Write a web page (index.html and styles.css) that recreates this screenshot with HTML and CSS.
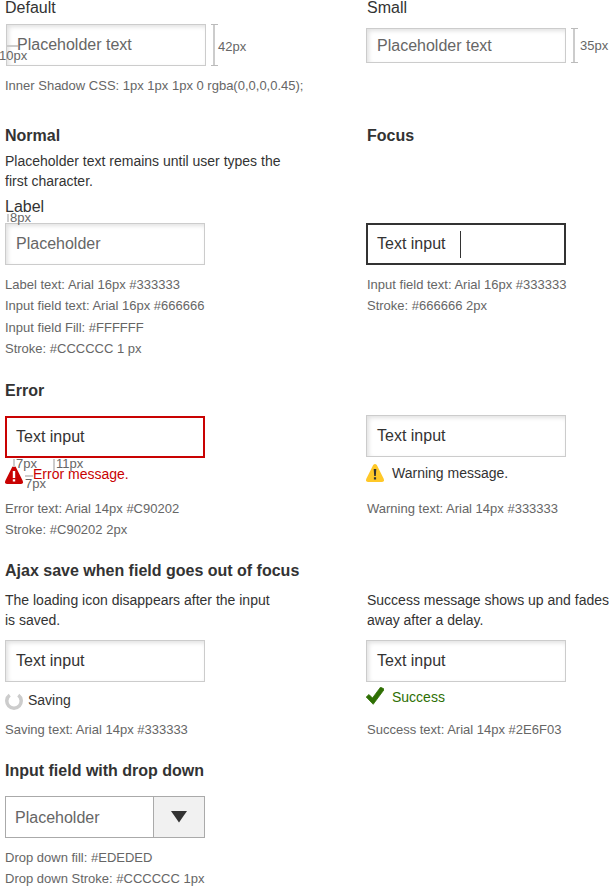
FILE: index.html
```
<!DOCTYPE html>
<html lang="en">
<head>
<meta charset="utf-8">
<title>Input fields</title>
<link rel="stylesheet" href="styles.css">
</head>
<body>
<main class="guide">
  <section class="row row-sizes">
    <div class="col">
      <div class="label">Default</div>
      <div class="field field-default">Placeholder text
        <span class="tick-h tick-pad"></span><span class="note note-pad">10px</span>
        <span class="bracket"></span><span class="note note-height">42px</span>
      </div>
      <div class="spec">Inner Shadow CSS: 1px 1px 1px 0 rgba(0,0,0,0.45);</div>
    </div>
    <div class="col">
      <div class="label">Small</div>
      <div class="field field-small">Placeholder text
        <span class="bracket"></span><span class="note note-height">35px</span>
      </div>
    </div>
  </section>

  <section class="row row-states">
    <div class="col">
      <h2>Normal</h2>
      <p>Placeholder text remains until user types the<br>first character.</p>
      <div class="label label-normal">Label</div>
      <div class="field">Placeholder
        <span class="tick-v tick-label"></span><span class="note note-label">8px</span>
      </div>
      <div class="spec">Label text: Arial 16px #333333<br>Input field text: Arial 16px #666666<br>Input field Fill: #FFFFFF<br>Stroke: #CCCCCC 1 px</div>
    </div>
    <div class="col">
      <h2>Focus</h2>
      <div class="field field-focus"><span>Text input</span><span class="caret"></span></div>
      <div class="spec">Input field text: Arial 16px #333333<br>Stroke: #666666 2px</div>
    </div>
  </section>

  <section class="row row-error">
    <div class="col">
      <h2>Error</h2>
      <div class="field field-error">Text input</div>
      <div class="message message-error">
        <svg class="icon" viewBox="0 0 18 18"><path fill="#c90202" d="M7.200 1Q9-1 10.800 1L17.700 14.800Q18.700 18 16 18H2Q-.7 18 .3 14.800Z"/><path fill="#fff" d="M7.800 5h2.400v7H7.800zM7.800 13.300h2.400v2.200H7.800z"/></svg>
        <span>Error message.</span>
        <span class="tick-v tick-icon"></span><span class="note note-icon">7px</span>
        <span class="tick-v tick-text"></span><span class="note note-text">11px</span>
        <span class="tick-h tick-gap"></span><span class="note note-gap">7px</span>
      </div>
      <div class="spec">Error text: Arial 14px #C90202<br>Stroke: #C90202 2px</div>
    </div>
    <div class="col">
      <div class="field field-warning">Text input</div>
      <div class="message message-warning">
        <svg class="icon" viewBox="0 0 18 18"><path fill="#ffc828" d="M7.200 1Q9-1 10.800 1L17.700 14.800Q18.700 18 16 18H2Q-.7 18 .3 14.800Z"/><path fill="#333" d="M7.700 5h2.600l-.5 7H8.200zM7.900 13.300h2.200v2.200H7.900z"/></svg>
        <span>Warning message.</span>
      </div>
      <div class="spec">Warning text: Arial 14px #333333</div>
    </div>
  </section>

  <section class="row row-ajax">
    <h2 class="wide">Ajax save when field goes out of focus</h2>
    <div class="col">
      <p>The loading icon disappears after the input<br>is saved.</p>
      <div class="field field-text">Text input</div>
      <div class="message message-saving">
        <svg class="icon" viewBox="0 0 18 18"><path d="M4.700 3.200A7.200 7.200 0 1 0 13.300 3.200" fill="none" stroke="#ccc" stroke-width="3.500"/></svg>
        <span>Saving</span>
      </div>
      <div class="spec">Saving text: Arial 14px #333333</div>
    </div>
    <div class="col">
      <p>Success message shows up and fades<br>away after a delay.</p>
      <div class="field field-text">Text input</div>
      <div class="message message-success">
        <svg class="icon" viewBox="0 0 18 18"><path d="M.2 10L3 7.500L6.500 11L14.500.2L17.800 1.800V3L7.200 17.300Z" fill="#2e6f03" stroke="#2e6f03" stroke-width=".8" stroke-linejoin="round"/></svg>
        <span>Success</span>
      </div>
      <div class="spec">Success text: Arial 14px #2E6F03</div>
    </div>
  </section>

  <section class="row row-select">
    <div class="col">
      <h2>Input field with drop down</h2>
      <div class="select">
        <span class="select-value">Placeholder</span>
        <span class="select-button"><svg width="16" height="12" viewBox="0 0 16 12"><path d="M0 0H16L8 11.500Z" fill="#333"/></svg></span>
      </div>
      <div class="spec">Drop down fill: #EDEDED<br>Drop down Stroke: #CCCCCC 1px</div>
    </div>
  </section>
</main>
</body>
</html>
```
FILE: styles.css
```
* { box-sizing: border-box; }
body {
  margin: 0;
  background: #fff;
  color: #333;
  font: 14px/20px Arial, "Liberation Sans", sans-serif;
}
.guide { width: 609px; height: 886px; overflow: hidden; }
.row {
  display: grid;
  grid-template-columns: 361px 243px;
  align-content: start;
  padding-left: 5px;
  white-space: nowrap;
}
.row-sizes { height: 125px; }
.row-states { height: 255px; }
.row-error { height: 180px; }
.row-ajax { height: 200px; }
.row-select { height: 126px; }
.wide { grid-column: 1 / -1; }

h2 { height: 20px; margin: 0; font-size: 16px; line-height: 22px; }
p { margin: 6px 0 0; }
.row-ajax p { margin-top: 10px; }
.col:nth-of-type(2) > :is(h2, p, .label, .spec) { padding-left: 1px; }
.label { font-size: 16px; line-height: 16px; }
.label-normal { margin-top: 8px; }

.field {
  position: relative;
  display: flex;
  align-items: center;
  width: 200px;
  height: 42px;
  margin-top: 8px;
  padding: 0 10px;
  border: 1px solid #ccc;
  background: #fff;
  box-shadow: inset 2px 2px 4px rgba(0, 0, 0, .12);
  color: #666;
  font-size: 16px;
}
.field-default { margin-left: 1px; }
.field-small { height: 35px; margin-top: 12px; }
.field-focus { margin-top: 78px; padding: 0 9px; border: 2px solid #333; box-shadow: none; color: #333; }
.field-error { margin-top: 16px; padding: 0 9px; border: 2px solid #c90202; box-shadow: none; color: #333; }
.field-warning { margin-top: 35px; color: #333; }
.field-text { margin-top: 10px; color: #333; }
.caret { width: 1px; height: 27px; margin-left: 15px; background: #333; }

.spec { margin-top: 9px; color: #666; font-size: 13px; line-height: 21px; }
.row-states .spec { line-height: 21.4px; }

.message { position: relative; display: flex; height: 20px; }
.icon { width: 18px; height: 18px; flex: none; }
.message-error { margin-top: 6px; gap: 10px; color: #c90202; }
.message-error .icon { margin-top: 2px; }
.message-warning { margin-top: 6px; gap: 8px; }
.message-warning .icon { margin-top: 1px; }
.row-error .spec { margin-top: 14px; }
.row-error .message-warning + .spec { margin-top: 15px; }
.message-saving { margin-top: 8px; gap: 5px; }
.message-saving .icon { margin-top: 2px; }
.message-success { margin-top: 5px; gap: 8px; color: #2e6f03; }
.message-success + .spec { margin-top: 12px; }

.note { position: absolute; color: #666; font-size: 13px; line-height: 16px; }
.tick-h, .tick-v { position: absolute; background: #ccc; }
.tick-h { height: 2px; }
.tick-v { width: 2px; }
.tick-pad { left: 0; top: 20px; width: 11px; }
.note-pad { left: -8px; top: 23px; }
.bracket {
  position: absolute;
  left: 204px;
  top: -1px;
  bottom: -1px;
  width: 7px;
  border: solid #bbb;
  border-width: 1px 0;
  background: linear-gradient(#ccc, #ccc) 2px 0 / 2px 100% no-repeat;
}
.note-height { left: 211px; top: 14px; }
.field-small .note-height { left: 213px; top: 9px; }
.tick-label { left: 1px; top: -10px; height: 8px; }
.note-label { left: 4px; top: -14px; }
.tick-icon { left: 8px; top: -5px; height: 8px; }
.note-icon { left: 11px; top: -8px; }
.tick-text { left: 48px; top: -5px; height: 12px; }
.note-text { left: 51px; top: -8px; }
.tick-gap { left: 20px; top: 11px; width: 8px; }
.note-gap { left: 20px; top: 12px; }

.select {
  display: flex;
  width: 200px;
  height: 42px;
  margin-top: 16px;
  border: 1px solid #aaa;
  color: #666;
  font-size: 16px;
}
.select-value { flex: 1; padding-left: 9px; line-height: 41px; }
.select-button {
  display: flex;
  align-items: center;
  justify-content: center;
  width: 51px;
  border-left: 1px solid #aaa;
  background: #f1f1f1;
}
```
